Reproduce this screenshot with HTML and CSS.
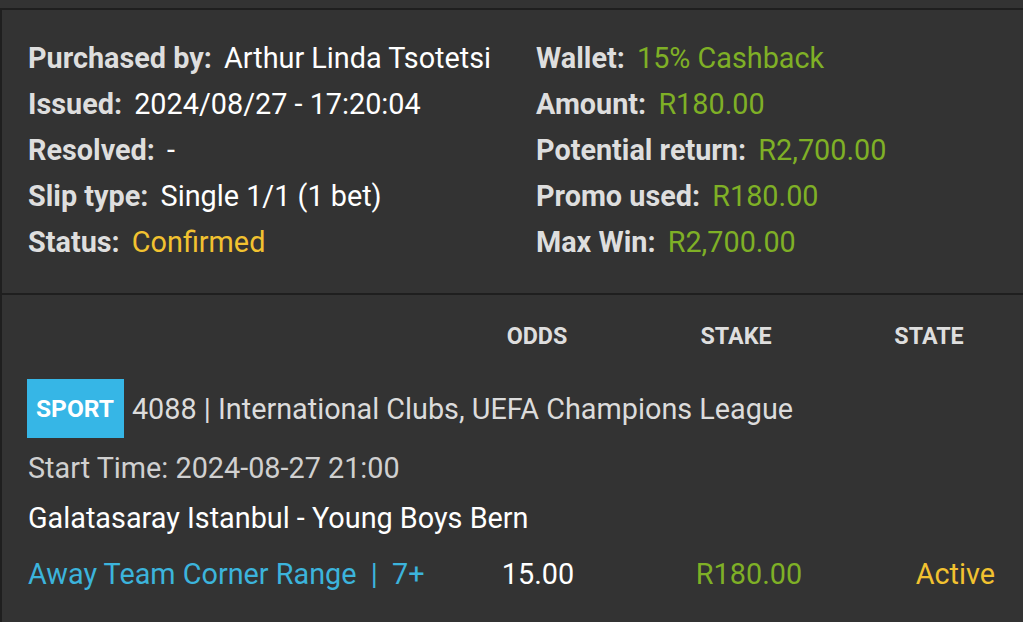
FILE: index.html
```html
<!DOCTYPE html>
<html>
<head>
  <title>Bet slip</title>
  <link rel="stylesheet" href="styles.css">
</head>
<body>
  <div class="slip">
    <div class="slip-summary">
      <div class="summary-col">
        <div class="info-row"><span class="label">Purchased by:</span> <span class="value">Arthur Linda Tsotetsi</span></div>
        <div class="info-row"><span class="label">Issued:</span> <span class="value">2024/08/27 - 17:20:04</span></div>
        <div class="info-row"><span class="label">Resolved:</span> <span class="value">-</span></div>
        <div class="info-row"><span class="label">Slip type:</span> <span class="value">Single 1/1 (1 bet)</span></div>
        <div class="info-row"><span class="label">Status:</span> <span class="value yellow">Confirmed</span></div>
      </div>
      <div class="summary-col">
        <div class="info-row"><span class="label">Wallet:</span> <span class="value green">15% Cashback</span></div>
        <div class="info-row"><span class="label">Amount:</span> <span class="value green">R180.00</span></div>
        <div class="info-row"><span class="label">Potential return:</span> <span class="value green">R2,700.00</span></div>
        <div class="info-row"><span class="label">Promo used:</span> <span class="value green">R180.00</span></div>
        <div class="info-row"><span class="label">Max Win:</span> <span class="value green">R2,700.00</span></div>
      </div>
    </div>

    <div class="slip-bets">
      <div class="bet-grid bet-head">
        <div></div>
        <div class="col-odds">ODDS</div>
        <div class="col-stake">STAKE</div>
        <div class="col-state">STATE</div>
      </div>

      <div class="event-title">
        <span class="badge">SPORT</span>
        <span class="event-name">4088 | International Clubs, UEFA Champions League</span>
      </div>
      <div class="event-time">Start Time: 2024-08-27 21:00</div>
      <div class="event-match">Galatasaray Istanbul - Young Boys Bern</div>

      <div class="bet-grid bet-row">
        <div class="market">Away Team Corner Range &nbsp;|&nbsp; 7+</div>
        <div class="col-odds odds-val">15.00</div>
        <div class="col-stake stake-val green">R180.00</div>
        <div class="col-state state-val yellow">Active</div>
      </div>
    </div>
  </div>
</body>
</html>
```

FILE: styles.css
```css
body {
  margin: 0;
  background-color: #333333;
  font-family: Roboto, "Liberation Sans", Arial, sans-serif;
  color: #ffffff;
}

.slip {
  margin-top: 8px;
  border-top: 2px solid #1f1f1f;
  border-left: 2px solid #1f1f1f;
  height: 612px;
  overflow: hidden;
}

.slip-summary {
  display: flex;
  padding: 25px 0 28px 26px;
  border-bottom: 2px solid #1f1f1f;
}

.summary-col {
  width: 508px;
  flex-shrink: 0;
}

.summary-col + .summary-col {
  flex: 1;
  width: auto;
}

.info-row {
  font-size: 28.8px;
  line-height: 46px;
  white-space: nowrap;
}

.label {
  color: #dedede;
  font-weight: 700;
  margin-right: 5px;
}

.value {
  color: #ffffff;
}

.green {
  color: #7fb026;
}

.yellow {
  color: #f2c230;
}

.slip-bets {
  padding: 26px 0 0 25px;
}

.bet-grid {
  display: grid;
  grid-template-columns: 410px 200px 198px 1fr;
  align-items: center;
}

.bet-head {
  font-size: 23.3px;
  line-height: 30px;
  font-weight: 700;
  color: #dedede;
  text-align: center;
}

.event-title {
  display: flex;
  align-items: center;
  margin-top: 28px;
  height: 59px;
}

.badge {
  background-color: #36b6e6;
  color: #ffffff;
  font-weight: 700;
  font-size: 24.5px;
  line-height: 59px;
  padding: 0 10px 0 9px;
  margin-right: 8px;
}

.event-name {
  font-size: 28.8px;
  color: #dcdcdc;
}

.event-time,
.event-match,
.bet-row {
  padding-left: 1px;
}

.event-time {
  margin-top: 5px;
  font-size: 28.8px;
  line-height: 50px;
  color: #d0d0d0;
}

.event-match {
  font-size: 28.8px;
  line-height: 50px;
  color: #ffffff;
}

.bet-row {
  margin-top: 6px;
  font-size: 28.8px;
  line-height: 50px;
}

.market {
  color: #3cb4dc;
  white-space: nowrap;
}

.odds-val {
  text-align: center;
  color: #ffffff;
}

.stake-val {
  text-align: center;
  padding-left: 24px;
}

.state-val {
  text-align: right;
  padding-right: 28px;
}
```
